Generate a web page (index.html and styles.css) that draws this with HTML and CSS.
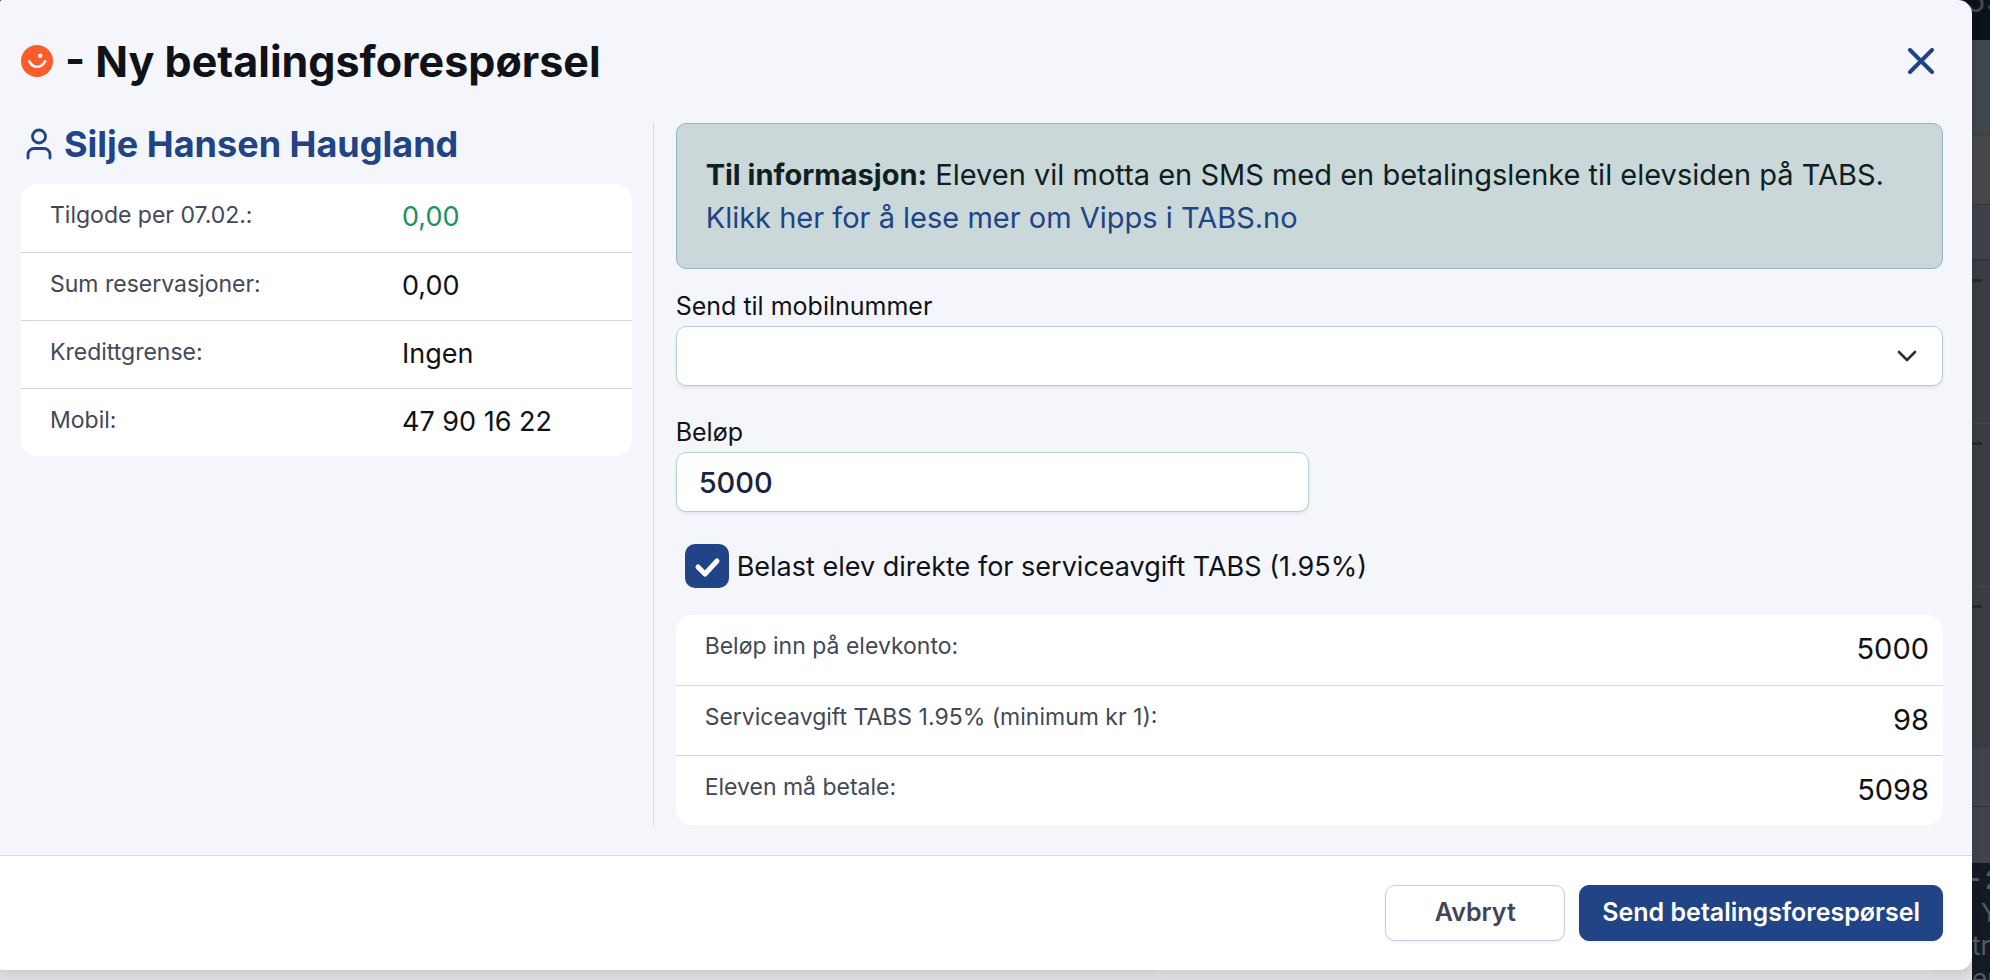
FILE: index.html
```html
<!DOCTYPE html>
<html lang="no">
<head>
<meta charset="utf-8">
<title>Ny betalingsforespørsel</title>
<link rel="stylesheet" href="styles.css">
</head>
<body>
<div class="backdrop" aria-hidden="true">
  <div class="side">
    <div class="band band-top"><span class="side-title">55</span></div>
    <div class="band band-a"></div>
    <div class="band band-b"></div>
    <div class="band band-c"></div>
    <div class="band band-row"><span class="dash"></span></div>
    <div class="band band-row"><span class="dash"></span></div>
    <div class="band band-row"><span class="dash"></span></div>
    <div class="band band-d"></div>
    <div class="band band-e"></div>
    <div class="band band-foot"><b>– 2</b><span>· Y</span><span class="inset">tr</span><span class="inset">er</span></div>
  </div>
  <div class="under"><div class="under-card"></div></div>
</div>
<main class="modal" role="dialog" aria-labelledby="dialog-title">
  <header class="head">
    <svg class="smiley" viewBox="0 0 32 32" aria-hidden="true"><circle cx="16" cy="16" r="16" fill="#ff5b2d"/><circle cx="19.200" cy="10.800" r="2.200" fill="#fff"/><path d="M8.300 16.300C10.300 20 13 21.800 16 21.800s6-1.800 8.200-5.500" fill="none" stroke="#fff" stroke-width="2.600" stroke-linecap="round"/></svg>
    <h1 class="title" id="dialog-title">- Ny betalingsforespørsel</h1>
    <button class="close" type="button" aria-label="Lukk"><svg viewBox="0 0 26 26" aria-hidden="true"><path d="M2 2l22 22M24 2L2 24"/></svg></button>
  </header>
  <div class="content">
    <section class="person">
      <h2 class="name"><svg class="user" viewBox="0 0 26 32" aria-hidden="true"><circle cx="13" cy="8.500" r="6.500"/><path d="M2 30v-3.500a6 6 0 0 1 6-6h10a6 6 0 0 1 6 6V30"/></svg>Silje Hansen Haugland</h2>
      <dl class="card">
        <div class="row"><dt>Tilgode per 07.02.:</dt><dd class="positive">0,00</dd></div>
        <div class="row"><dt>Sum reservasjoner:</dt><dd>0,00</dd></div>
        <div class="row"><dt>Kredittgrense:</dt><dd>Ingen</dd></div>
        <div class="row"><dt>Mobil:</dt><dd>47 90 16 22</dd></div>
      </dl>
    </section>
    <form class="form">
      <p class="alert"><strong>Til informasjon:</strong> Eleven vil motta en SMS med en betalingslenke til elevsiden på TABS.<br><a href="#vipps">Klikk her for å lese mer om Vipps i TABS.no</a></p>
      <div class="field">
        <label for="phone">Send til mobilnummer</label>
        <div class="select-wrap">
          <select class="control" id="phone"><option></option></select>
          <svg class="chevron" viewBox="0 0 20 12" aria-hidden="true"><path d="M2 2l8 8 8-8"/></svg>
        </div>
      </div>
      <div class="field">
        <label for="amount">Beløp</label>
        <input class="control amount" id="amount" type="text" inputmode="numeric" value="5000">
      </div>
      <div class="check">
        <span class="box"><input type="checkbox" id="fee" checked><svg class="tick" viewBox="0 0 44 44" aria-hidden="true"><path d="M13 23l7 7 12-13"/></svg></span>
        <label for="fee">Belast elev direkte for serviceavgift TABS (1.95%)</label>
      </div>
      <dl class="card sums">
        <div class="row"><dt>Beløp inn på elevkonto:</dt><dd>5000</dd></div>
        <div class="row"><dt>Serviceavgift TABS 1.95% (minimum kr 1):</dt><dd>98</dd></div>
        <div class="row"><dt>Eleven må betale:</dt><dd>5098</dd></div>
      </dl>
    </form>
  </div>
  <footer class="foot">
    <button class="btn" type="button">Avbryt</button>
    <button class="btn primary" type="button">Send betalingsforespørsel</button>
  </footer>
</main>
</body>
</html>
```
FILE: styles.css
```css
* { box-sizing: border-box; }

body {
  margin: 0;
  min-height: 100vh;
  font-family: Inter, "Liberation Sans", sans-serif;
  font-size: 27px;
  color: #0f1218;
  background: #141a25;
}

h1, h2, p, dl, dd { margin: 0; }

/* dimmed page behind the dialog */
.backdrop {
  position: absolute;
  inset: 0;
  overflow: hidden;
}

.side {
  position: absolute;
  inset: 0 0 0 auto;
  width: 24px;
}

.band-top { height: 40px; background: #0d1119; }
.band-a { height: 95px; background: #41454c; border-bottom: 1px solid #393c42; }
.band-b { height: 70px; background: #454749; border-bottom: 1px solid #333538; }
.band-c { height: 56px; background: #40424a; border-bottom: 2px solid #34363a; }
.band-row { height: 163px; padding: 18px 0 0 6px; background: #3a3d41; border-bottom: 1px solid #43464a; }
.band-d { height: 57px; background: #41434b; border-bottom: 1px solid #303238; }
.band-e { height: 56px; background: #41434b; }

.band-foot {
  height: 117px;
  display: flex;
  flex-direction: column;
  font-size: 26px;
  line-height: 33px;
  white-space: nowrap;
  color: #545962;
  background: #141a25;
}

.inset { padding-left: 6px; }

.side-title {
  display: block;
  font-size: 32px;
  line-height: 2px;
  color: #45484e;
}

.dash {
  display: block;
  width: 10px;
  height: 3px;
  background: #26292d;
}

.under {
  position: absolute;
  inset: auto 18px 0 0;
  height: 20px;
  background: #dfe1e5;
}

.under-card {
  width: 40%;
  height: 17px;
  margin: 0 32px 0 auto;
  border-radius: 0 0 14px 14px;
  background: #e4e4e4;
}

.modal {
  position: relative;
  display: flex;
  flex-direction: column;
  min-height: calc(100vh - 10px);
  margin-right: 18px;
  border-radius: 2px 14px 14px 2px;
  overflow: hidden;
  background: #f4f6fb;
  box-shadow: 0 4px 12px rgba(20, 26, 37, 0.12);
}

.head {
  display: flex;
  align-items: center;
  gap: 12px;
  height: 123px;
  padding: 0 36px 2px 21px;
}

.smiley { width: 32px; height: 32px; }

.title {
  flex: 1;
  font-size: 43px;
  line-height: 56px;
  font-weight: 700;
}

.close {
  display: flex;
  padding: 2px;
  border: 0;
  background: none;
}

.close svg { width: 26px; height: 26px; }

.close path, .user, .chevron, .tick {
  fill: none;
  stroke-linecap: round;
  stroke-linejoin: round;
}

.close path { stroke: #204485; stroke-width: 4; }

.content {
  flex: 1;
  display: grid;
  grid-template-columns: minmax(0, 633fr) minmax(0, 1290fr);
  padding: 0 29px 29px 21px;
}

.person {
  padding-right: 21px;
  border-right: 1px solid #d5d9e0;
}

.name {
  display: flex;
  align-items: center;
  gap: 12px;
  padding-left: 5px;
  font-size: 36px;
  line-height: 42px;
  font-weight: 700;
  color: #204485;
}

.user { width: 26px; height: 32px; stroke: #204485; stroke-width: 2.800; }

.card {
  border-radius: 16px;
  background: #fff;
}

.person .card { margin-top: 19px; }

.row {
  display: grid;
  grid-template-columns: 352px 1fr;
  height: 68px;
  padding: 14px 14px 0 29px;
  line-height: 38px;
}

.row + .row { border-top: 1px solid #d5d7da; }
.row dt { font-size: 23px; line-height: 34px; color: #424857; }
.positive { color: #1a9163; }

.form {
  display: flex;
  flex-direction: column;
  padding-left: 22px;
}

.alert {
  padding: 29px;
  border: 1px solid #96b5b2;
  border-radius: 10px;
  font-size: 29px;
  line-height: 43px;
  color: #10201f;
  background: #cad8d9;
}

.alert a { color: #204485; text-decoration: none; }

.field {
  display: flex;
  flex-direction: column;
  gap: 2px;
  margin-top: 19px;
}

.field + .field { margin-top: 28px; }
.field label { font-size: 25px; line-height: 36px; }

.control {
  width: 100%;
  height: 60px;
  padding: 0 22px;
  border: 1px solid #b8cfcf;
  border-radius: 10px;
  font: 500 29px Inter, "Liberation Sans", sans-serif;
  color: #1a2540;
  background: #fff;
  box-shadow: 0 2px 3px rgba(16, 24, 40, 0.08);
  appearance: none;
}

.amount { width: 50%; }
.select-wrap { position: relative; display: flex; }

.chevron {
  position: absolute;
  top: 24px;
  right: 26px;
  width: 20px;
  height: 12px;
  stroke: #2b2e33;
  stroke-width: 2.600;
  pointer-events: none;
}

.check {
  display: flex;
  align-items: center;
  gap: 8px;
  margin: 32px 0 27px 9px;
}

.box { position: relative; display: flex; }

.box input {
  width: 44px;
  height: 44px;
  margin: 0;
  border-radius: 10px;
  background: #204485;
  appearance: none;
}

.tick {
  position: absolute;
  inset: 0;
  stroke: #fff;
  stroke-width: 5;
  pointer-events: none;
}

.sums .row {
  grid-template-columns: 1fr auto;
  height: 70px;
  font-size: 29px;
  line-height: 40px;
}

.foot {
  display: flex;
  justify-content: flex-end;
  gap: 14px;
  padding: 29px;
  border-top: 1px solid #d5dae1;
  background: #fff;
}

.btn {
  min-width: 180px;
  height: 56px;
  padding: 0 22px 2px;
  border: 1px solid #c5cee0;
  border-radius: 10px;
  font: 600 25px Inter, "Liberation Sans", sans-serif;
  color: #404655;
  background: #fff;
  box-shadow: 0 1px 3px rgba(16, 24, 40, 0.08);
}

.primary { border-color: #204485; color: #fff; background: #204485; }
```
